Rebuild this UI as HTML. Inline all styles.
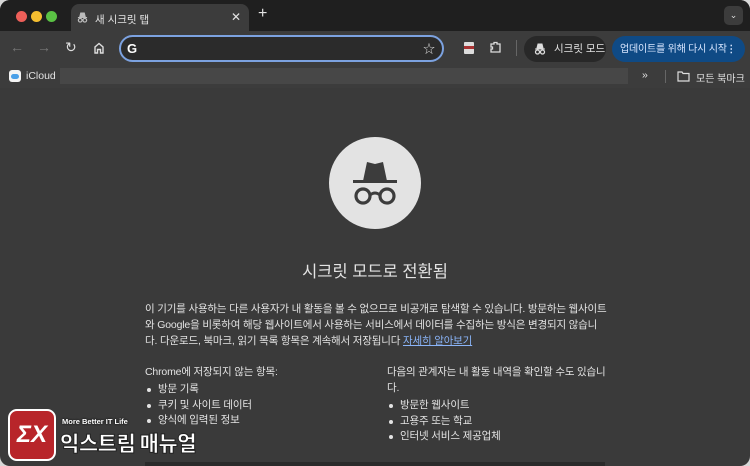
<!DOCTYPE html>
<html><head><meta charset="utf-8"><style>
*{margin:0;padding:0;box-sizing:border-box}
body{width:750px;height:466px;background:#d8d8d8;font-family:"Liberation Sans","Noto Sans CJK KR",sans-serif;overflow:hidden;position:relative}
.win{position:absolute;left:0;top:0;width:750px;height:466px;border-radius:10px;background:#3a3a3a;overflow:hidden}
.tb{position:absolute;left:0;top:0;width:750px;height:31px;background:#1f1f1f}
.dot{position:absolute;top:11px;width:11px;height:11px;border-radius:50%}
.tab{position:absolute;left:71px;top:4px;width:178px;height:30px;background:#3c3c3c;border-radius:8px 8px 0 0;color:#e3e3e3;font-size:10.5px}
.tool{position:absolute;left:0;top:31px;width:750px;height:34px;background:#3c3c3c}
.omni{position:absolute;left:119px;top:35px;width:325px;height:27px;border:2px solid #7ca2e0;border-radius:14px;background:#2b2b2b}
.bm{position:absolute;left:0;top:65px;width:750px;height:23px;background:#3c3c3c;color:#e3e3e3;font-size:10.5px}
.c{color:#e3e3e3;position:absolute;white-space:nowrap}
p{font-size:10.5px;line-height:16px;letter-spacing:-0.17px}
ul{list-style:none}
li{font-size:10.5px;line-height:15.5px;padding-left:13px;position:relative;letter-spacing:-0.15px}
li:before{content:"";position:absolute;left:2px;top:6px;width:4px;height:4px;border-radius:50%;background:#e3e3e3}
span{white-space:nowrap}
</style></head><body>
<div class="win">
<div class="tb"></div>
<div class="dot" style="left:16px;background:#ed5f59"></div>
<div class="dot" style="left:31px;background:#f5be30"></div>
<div class="dot" style="left:46px;background:#5ac144"></div>
<div class="tab">
<svg style="position:absolute;left:6px;top:8px" width="11" height="11" viewBox="0 0 12 12"><path d="M3 5 L4 1 H8 L9 5 Z M1 6 H11" stroke="#bbb" fill="#bbb"/><circle cx="3.5" cy="9" r="2" fill="none" stroke="#bbb" stroke-width="1.3"/><circle cx="8.5" cy="9" r="2" fill="none" stroke="#bbb" stroke-width="1.3"/></svg>
<span style="position:absolute;left:24px;top:8px">새 시크릿 탭</span>
<span style="position:absolute;left:160px;top:6px;font-size:12px">✕</span></div>
<span style="position:absolute;left:258px;top:5px;color:#e3e3e3;font-size:16px">+</span>
<div style="position:absolute;left:724px;top:6px;width:19px;height:19px;border-radius:5px;background:#3c3c3c;color:#ddd;font-size:9px;text-align:center;line-height:19px">⌄</div>
<div class="tool"></div>
<span style="position:absolute;left:10px;top:39px;color:#777;font-size:14px">←</span>
<span style="position:absolute;left:37px;top:39px;color:#777;font-size:14px">→</span>
<span style="position:absolute;left:65px;top:39px;color:#ddd;font-size:14px">↻</span>
<svg style="position:absolute;left:93px;top:42px" width="12" height="12" viewBox="0 0 12 12"><path d="M2 11V5L6 1.5 10 5V11H7.5V7.5H4.5V11Z" fill="none" stroke="#ddd" stroke-width="1.4"/></svg>
<div class="omni"></div>
<span style="position:absolute;left:127px;top:41px;color:#fff;font-size:13px;font-weight:bold">G</span>
<span style="position:absolute;left:423px;top:40px;color:#ddd;font-size:12px">☆</span>
<div style="position:absolute;left:464px;top:42px;width:10px;height:12px;background:#ddd;border-radius:1px"><div style="margin-top:4px;height:3px;background:#a33"></div></div>
<svg style="position:absolute;left:489px;top:41px" width="13" height="13" viewBox="0 0 13 13"><path d="M2 3H5V1.5H8V3H11V11H2V8H3.5V6H2Z" fill="none" stroke="#ddd" stroke-width="1.3"/></svg>
<div style="position:absolute;left:516px;top:40px;width:1px;height:16px;background:#666"></div>
<div style="position:absolute;left:524px;top:36px;width:82px;height:26px;border-radius:13px;background:#282828;color:#e3e3e3;font-size:10.5px;line-height:27px;padding-left:30px;white-space:nowrap">시크릿 모드
<svg style="position:absolute;left:10px;top:7px" width="12" height="12" viewBox="0 0 12 12"><path d="M3 5 L4 1 H8 L9 5 Z M1 6 H11" stroke="#ddd" fill="#ddd"/><circle cx="3.5" cy="9" r="2" fill="none" stroke="#ddd" stroke-width="1.3"/><circle cx="8.5" cy="9" r="2" fill="none" stroke="#ddd" stroke-width="1.3"/></svg></div>
<div style="position:absolute;left:612px;top:36px;width:133px;height:26px;border-radius:13px;background:#0f4a85;color:#d8e6ff;font-size:10px;line-height:27px;padding-left:8px;white-space:nowrap;letter-spacing:-0.2px">업데이트를 위해 다시 시작<span style="position:absolute;right:9px;top:0;font-weight:bold">⋮</span></div>
<div class="bm">
<div style="position:absolute;left:9px;top:5px;width:12px;height:12px;border-radius:3px;background:#f4f4f4"><div style="margin:4px 2px;height:5px;border-radius:3px;background:#4aa0e8"></div></div>
<span style="position:absolute;left:26px;top:5px">iCloud</span>
<div style="position:absolute;left:60px;top:3px;width:568px;height:16px;background:#474747"></div>
<span style="position:absolute;left:642px;top:4px">»</span>
<div style="position:absolute;left:665px;top:5px;width:1px;height:13px;background:#666"></div>
<svg style="position:absolute;left:677px;top:6px" width="13" height="11" viewBox="0 0 13 11"><path d="M1 1H5L6 2.5H12V10H1Z" fill="none" stroke="#ddd" stroke-width="1.2"/></svg>
<span style="position:absolute;left:696px;top:5px;font-size:10px">모든 북마크</span></div>
<div style="position:absolute;left:329px;top:137px;width:92px;height:92px;border-radius:50%;background:#e3e3e3"></div>
<svg style="position:absolute;left:347px;top:160px" width="56" height="50" viewBox="0 0 56 50"><path d="M16 21 L20 2 L28 4 L36 2 L40 21Z" fill="#3c3c3c"/><rect x="6" y="20" width="44" height="3" fill="#3c3c3c"/><circle cx="16" cy="36" r="7" fill="none" stroke="#3c3c3c" stroke-width="3.2"/><circle cx="40" cy="36" r="7" fill="none" stroke="#3c3c3c" stroke-width="3.2"/><path d="M23 35 Q28 31 33 35" fill="none" stroke="#3c3c3c" stroke-width="3"/></svg>
<div class="c" style="left:0;width:750px;top:258px;text-align:center;font-size:16.5px">시크릿 모드로 전환됨</div>
<div class="c" style="left:145px;top:301px"><p>이 기기를 사용하는 다른 사용자가 내 활동을 볼 수 없으므로 비공개로 탐색할 수 있습니다. 방문하는 웹사이트<br>와 Google을 비롯하여 해당 웹사이트에서 사용하는 서비스에서 데이터를 수집하는 방식은 변경되지 않습니<br>다. 다운로드, 북마크, 읽기 목록 항목은 계속해서 저장됩니다 <u style="color:#8ab4f8">자세히 알아보기</u></p></div>
<div class="c" style="left:145px;top:364px"><p>Chrome에 저장되지 않는 항목:</p><ul style="margin-top:2px"><li>방문 기록</li><li>쿠키 및 사이트 데이터</li><li>양식에 입력된 정보</li></ul></div>
<div class="c" style="left:387px;top:364px"><p>다음의 관계자는 내 활동 내역을 확인할 수도 있습니<br>다.</p><ul style="margin-top:2px"><li>방문한 웹사이트</li><li>고용주 또는 학교</li><li>인터넷 서비스 제공업체</li></ul></div>
<div style="position:absolute;left:145px;top:462px;width:460px;height:4px;background:#2a2a2a"></div>
</div>
<div style="position:absolute;left:8px;top:409px;width:48px;height:52px;border-radius:9px;background:#b8252a;border:2px solid #fff;color:#fff;font-weight:bold;font-size:24px;text-align:center;line-height:48px;font-style:italic">ΣX</div>
<div style="position:absolute;left:62px;top:417px;color:#fff;font-size:7.5px;font-weight:bold;text-shadow:0 0 2px #000;white-space:nowrap">More Better IT Life</div>
<div style="position:absolute;left:60px;top:427px;color:#fff;font-size:21px;font-weight:900;font-family:'Noto Sans CJK KR',sans-serif;-webkit-text-stroke:1px #222;letter-spacing:-0.5px;line-height:32px;white-space:nowrap">익스트림 매뉴얼</div>
</body></html>
